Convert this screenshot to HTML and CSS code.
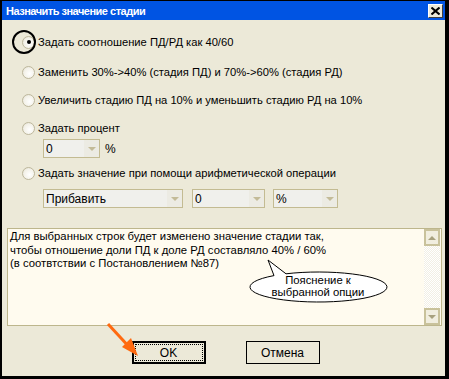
FILE: index.html
```html
<!DOCTYPE html>
<html lang="ru">
    <head>
        <meta charset="UTF-8">
        <title>Назначить значение стадии</title>
        <link rel="stylesheet" href="styles.css">
    </head>

    <body>

        <div class="window">

            <div class="titlebar">
                <span class="title_txt">Назначить значение стадии</span>
                <button class="close_btn">
                    <svg width="9" height="8" viewBox="0 0 9 8"><path d="M0.5 0.5 L8.5 7.5 M8.5 0.5 L0.5 7.5" stroke="#000" stroke-width="2"/></svg>
                </button>
            </div>

            <div class="content">

                <div class="opt row_1">
                    <span class="radio checked"></span>
                    <span>Задать соотношение ПД/РД как 40/60</span>
                </div>

                <div class="opt row_2">
                    <span class="radio"></span>
                    <span>Заменить 30%-&gt;40% (стадия ПД) и 70%-&gt;60% (стадия РД)</span>
                </div>

                <div class="opt row_3">
                    <span class="radio"></span>
                    <span>Увеличить стадию ПД на 10% и уменьшить стадию РД на 10%</span>
                </div>

                <div class="opt row_4">
                    <span class="radio"></span>
                    <span>Задать процент</span>
                </div>

                <div class="combo_row row_pct">
                    <div class="combo w_pct"><span class="combo_val">0</span><span class="combo_btn"></span></div>
                    <span class="unit">%</span>
                </div>

                <div class="opt row_5">
                    <span class="radio"></span>
                    <span>Задать значение при помощи арифметической операции</span>
                </div>

                <div class="combo_row row_ops">
                    <div class="combo w_op"><span class="combo_val">Прибавить</span><span class="combo_btn"></span></div>
                    <div class="combo w_num"><span class="combo_val">0</span><span class="combo_btn"></span></div>
                    <div class="combo w_unit"><span class="combo_val">%</span><span class="combo_btn"></span></div>
                </div>

                <div class="memo">
                    <div class="memo_txt">
                        Для выбранных строк будет изменено значение стадии так,<br>
                        чтобы отношение доли ПД к доле РД составляло 40% / 60%<br>
                        (в соотвтствии с Постановлением №87)
                    </div>
                    <div class="scrollbar">
                        <span class="sb_btn"><span class="tri_up"></span></span>
                        <span class="sb_track"></span>
                        <span class="sb_btn"><span class="tri_down"></span></span>
                    </div>
                </div>

                <div class="buttons">
                    <button class="btn default"><span class="focus">OK</span></button>
                    <button class="btn">Отмена</button>
                </div>

            </div>

            <!-- annotations drawn over the dialog -->
            <div class="ring"></div>

            <svg class="bubble" width="150" height="48" viewBox="0 0 150 48">
                <path d="M26 16.6 L20 1 L38 14.8 A68.5 15 0 1 1 26 16.6 Z" fill="#fff" stroke="#000" stroke-width="1"/>
            </svg>
            <div class="bubble_txt">Пояснение к<br>выбранной опции</div>

            <svg class="arrow" width="40" height="40" viewBox="0 0 40 40">
                <path d="M2 2 L26 28" stroke="#FF6A10" stroke-width="3"/>
                <path d="M32 34 L16 25 L25 16 Z" fill="#FF6A10"/>
            </svg>

        </div>

    </body>
</html>
```

FILE: styles.css
```css
body {
    margin: 0;
    background-color: #000;
    width: 449px;
    height: 379px;
    overflow: hidden;
    font-family: 'Liberation Sans', Arial, sans-serif;
    font-size: 11.2px;
    color: #000;
}

.window {
    position: relative;
    margin: 1px 0 0 2px;
    width: 443px;
    height: 375px;
    background-color: #ECE9D8;
}

.titlebar {
    height: 19px;
    background-color: #0054E3;
    display: flex;
    align-items: center;
    justify-content: space-between;
    padding: 0 2px 0 4px;
}

.title_txt {
    color: #fff;
    font-weight: bold;
    font-size: 11px;
    letter-spacing: -0.5px;
}

.close_btn {
    width: 15px;
    height: 14px;
    padding: 0;
    margin-top: 1px;
    background-color: #ECE9D8;
    border: 1px solid;
    border-color: #fff #404040 #404040 #fff;
    display: flex;
    align-items: center;
    justify-content: center;
}

.content {
    display: flex;
    flex-direction: column;
    padding: 14px 3px 0 5px;
}

.opt {
    display: flex;
    align-items: center;
    gap: 3px;
    height: 16px;
    padding-left: 15px;
}

.row_2 { margin-top: 14px; }
.row_3 { margin-top: 12px; }
.row_4 { margin-top: 12px; }
.row_5 { margin-top: 7px; }

.radio {
    box-sizing: border-box;
    width: 13px;
    height: 13px;
    border-radius: 50%;
    border: 1px solid #BDB79C;
    background: radial-gradient(circle at 60% 60%, #fff 0, #F3F1E8 60%, #DCD9C7 100%);
    display: flex;
    align-items: center;
    justify-content: center;
}

.radio.checked::after {
    content: "";
    width: 4px;
    height: 4px;
    border-radius: 50%;
    background-color: #000;
}

.combo_row {
    display: flex;
    align-items: center;
    padding-left: 36px;
}

.row_pct { margin-top: 3px; gap: 5px; }
.row_ops { margin-top: 8px; gap: 8px; }

.combo {
    box-sizing: border-box;
    height: 19px;
    border: 1px solid #C3BB92;
    background-color: #F0F0EC;
    display: flex;
    align-items: center;
    justify-content: space-between;
}

.w_pct { width: 57px; }
.w_op { width: 140px; }
.w_num { width: 73px; margin-left: 1px; }
.w_unit { width: 65px; }

.combo_val {
    padding-left: 2px;
    font-size: 12px;
}

.combo_btn {
    width: 15px;
    height: 17px;
    background-color: #ECEBE3;
    display: flex;
    align-items: center;
    justify-content: center;
}

.combo_btn::after {
    content: "";
    border-left: 4px solid transparent;
    border-right: 4px solid transparent;
    border-top: 4px solid #C3BB98;
    margin-top: 1px;
}

.unit {
    font-size: 12px;
}

.memo {
    box-sizing: border-box;
    margin-top: 20px;
    height: 98px;
    border: 1px solid #BDB68C;
    background-color: #FFFBEF;
    display: flex;
    justify-content: space-between;
}

.memo_txt {
    padding: 1px 0 0 2px;
    line-height: 13.5px;
    font-size: 11.3px;
}

.scrollbar {
    width: 16px;
    display: flex;
    flex-direction: column;
    margin: 0 1px 0 0;
}

.sb_btn {
    box-sizing: border-box;
    height: 17px;
    border: 2px solid #C9C29B;
    background-color: #F1EEDF;
    display: flex;
    align-items: center;
    justify-content: center;
}

.sb_track {
    flex: 1;
    background: repeating-conic-gradient(#F2EFE4 0 25%, #FFFFFF 0 50%) 0 0 / 2px 2px;
}

.tri_up {
    border-left: 4px solid transparent;
    border-right: 4px solid transparent;
    border-bottom: 4px solid #A8A17E;
}

.tri_down {
    border-left: 4px solid transparent;
    border-right: 4px solid transparent;
    border-top: 4px solid #A8A17E;
}

.buttons {
    display: flex;
    justify-content: center;
    gap: 40px;
    margin-top: 15px;
    padding-left: 2px;
}

.btn {
    box-sizing: border-box;
    width: 74px;
    height: 23px;
    padding: 0;
    background-color: #ECE9D8;
    border: 1px solid #000;
    font-family: 'Liberation Sans', Arial, sans-serif;
    font-size: 12px;
    color: #000;
}

.btn.default {
    border: 2px solid #000;
    padding: 1px;
}

.focus {
    display: flex;
    align-items: center;
    justify-content: center;
    height: 100%;
    border: 1px dotted #000;
    box-sizing: border-box;
}

.ring {
    position: absolute;
    left: 10px;
    top: 29px;
    width: 20px;
    height: 20px;
    border: 2px solid #000;
    border-radius: 50%;
}

.bubble {
    position: absolute;
    left: 246px;
    top: 258px;
}

.bubble_txt {
    position: absolute;
    left: 248px;
    top: 273px;
    width: 136px;
    text-align: center;
    line-height: 12px;
    font-size: 11.3px;
}

.arrow {
    position: absolute;
    left: 104px;
    top: 321px;
}
```
